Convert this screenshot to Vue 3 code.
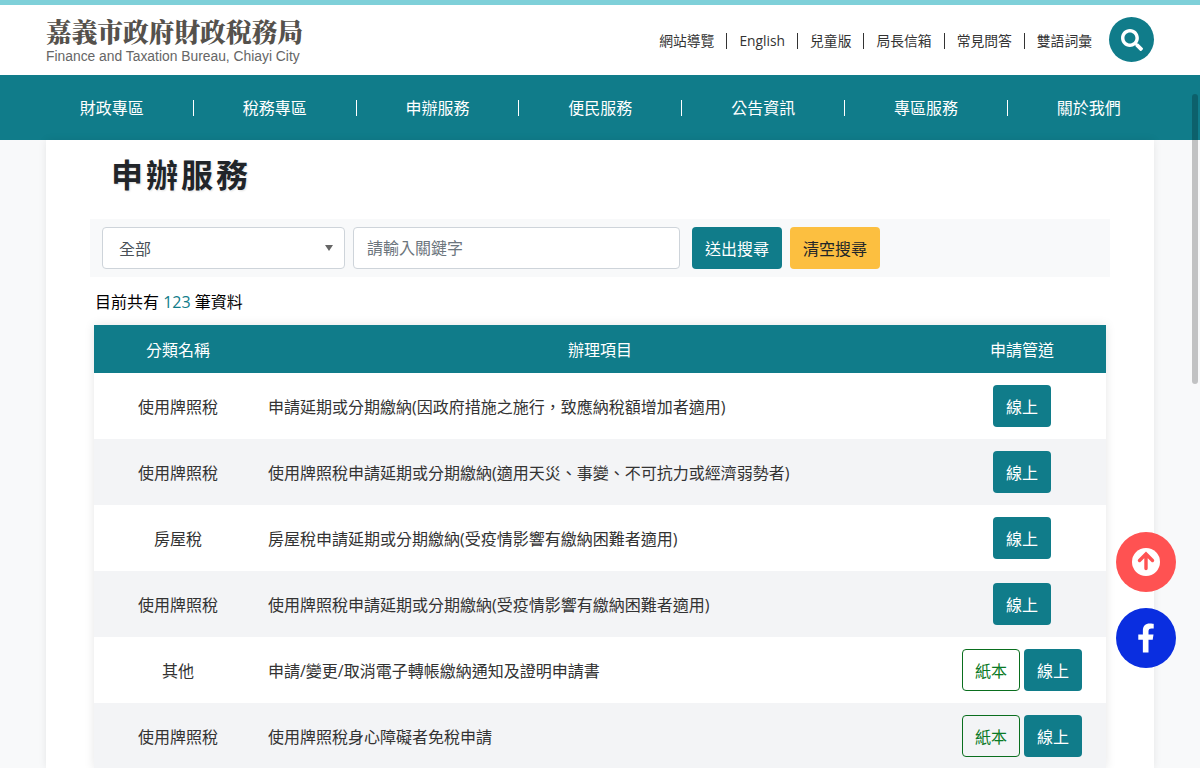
<template>
  <div class="page" lang="zh-Hant">
    <header class="site-header">
      <div class="logo">
        <div class="logo-title">嘉義市政府財政稅務局</div>
        <div class="logo-sub">Finance and Taxation Bureau, Chiayi City</div>
      </div>
      <div class="top-right">
        <ul class="top-links">
          <li v-for="link in topLinks" :key="link">{{ link }}</li>
        </ul>
        <button class="search-circle" type="button" aria-label="搜尋">
          <svg width="22" height="22" viewBox="0 0 512 512">
            <path fill="#fff" d="M505 442.700L405.300 343c-4.500-4.500-10.600-7-17-7H372c27.600-35.300 44-79.700 44-128C416 93.100 322.900 0 208 0S0 93.100 0 208s93.100 208 208 208c48.300 0 92.700-16.400 128-44v16.300c0 6.400 2.500 12.500 7 17l99.700 99.700c9.400 9.400 24.600 9.400 33.900 0l28.300-28.300c9.400-9.400 9.400-24.600.1-34zM208 336c-70.700 0-128-57.200-128-128 0-70.700 57.200-128 128-128 70.700 0 128 57.200 128 128 0 70.700-57.200 128-128 128z" />
          </svg>
        </button>
      </div>
    </header>

    <nav class="main-nav">
      <a v-for="item in navItems" :key="item" class="nav-item">{{ item }}</a>
    </nav>

    <main class="content">
      <h1>申辦服務</h1>

      <form class="search-bar" @submit.prevent>
        <div class="select-box">
          <span>全部</span>
          <i class="caret"></i>
        </div>
        <input class="keyword" type="text" placeholder="請輸入關鍵字" />
        <button class="btn btn-teal wide" type="submit">送出搜尋</button>
        <button class="btn btn-yellow wide" type="button">清空搜尋</button>
      </form>

      <p class="count">目前共有 <span>123</span> 筆資料</p>

      <table class="data-table">
        <thead>
          <tr>
            <th class="col-type">分類名稱</th>
            <th>辦理項目</th>
            <th class="col-channel">申請管道</th>
          </tr>
        </thead>
        <tbody>
          <tr v-for="row in rows" :key="row.title">
            <td class="cell-center">{{ row.type }}</td>
            <td class="cell-title">{{ row.title }}</td>
            <td class="cell-center">
              <div class="channels">
                <a v-if="row.paper" class="btn btn-outline">紙本</a>
                <a class="btn btn-teal">線上</a>
              </div>
            </td>
          </tr>
        </tbody>
      </table>
    </main>

    <div class="float-btns">
      <a class="float-btn to-top">
        <svg width="30" height="30" viewBox="0 0 30 30">
          <circle cx="15" cy="15" r="14" fill="#fff" />
          <path d="M15 21.500V7M8.500 13.500L15 7l6.500 6.500" fill="none" stroke="#ff5252" stroke-width="3.400" stroke-linecap="round" />
        </svg>
      </a>
      <a class="float-btn fb">
        <svg width="18" height="30" viewBox="0 0 320 512">
          <path fill="#fff" d="M279.140 288l14.220-92.660h-88.910v-60.130c0-25.350 12.420-50.060 52.240-50.060h40.420V6.260S260.430 0 225.360 0c-73.220 0-121.080 44.380-121.080 124.720v70.620H22.890V288h81.390v224h100.170V288z" />
        </svg>
      </a>
    </div>

    <div class="scroll-thumb"></div>
  </div>
</template>

<script setup>
const topLinks = ['網站導覽', 'English', '兒童版', '局長信箱', '常見問答', '雙語詞彙'];

const navItems = ['財政專區', '稅務專區', '申辦服務', '便民服務', '公告資訊', '專區服務', '關於我們'];

const rows = [
  { type: '使用牌照稅', title: '申請延期或分期繳納(因政府措施之施行，致應納稅額增加者適用)', paper: false },
  { type: '使用牌照稅', title: '使用牌照稅申請延期或分期繳納(適用天災、事變、不可抗力或經濟弱勢者)', paper: false },
  { type: '房屋稅', title: '房屋稅申請延期或分期繳納(受疫情影響有繳納困難者適用)', paper: false },
  { type: '使用牌照稅', title: '使用牌照稅申請延期或分期繳納(受疫情影響有繳納困難者適用)', paper: false },
  { type: '其他', title: '申請/變更/取消電子轉帳繳納通知及證明申請書', paper: true },
  { type: '使用牌照稅', title: '使用牌照稅身心障礙者免稅申請', paper: true },
];
</script>

<style>
html,
body {
  margin: 0;
  height: 768px;
  overflow: hidden;
  background: #f8f9fa;
}
</style>

<style scoped>
.page {
  position: relative;
  height: 768px;
  overflow: hidden;
  font-family: "Open Sans", "Noto Sans CJK TC", sans-serif;
  font-size: 16px;
  color: #212529;
}

.site-header {
  height: 70px;
  border-top: 5px solid #7fd0d9;
  background: #fff;
  display: flex;
  justify-content: space-between;
  align-items: center;
  padding: 0 46px;
}

.logo {
  margin-top: -2px;
}

.logo-title {
  font-family: "Noto Serif CJK TC", "Noto Sans CJK TC", serif;
  font-size: 25.700px;
  font-weight: 900;
  line-height: 32px;
  color: #55514c;
}

.logo-sub {
  font-family: "Liberation Sans", sans-serif;
  font-size: 13.850px;
  line-height: 16px;
  color: #666;
  margin-top: 1px;
}

.top-right {
  display: flex;
  align-items: center;
}

.top-links {
  display: flex;
  list-style: none;
  margin: 2px 5px 0 0;
  padding: 0;
  font-size: 13.800px;
  color: #333;
}

.top-links li {
  line-height: 16px;
  padding: 0 12px;
  border-left: 1px solid #333;
}

.top-links li:first-child {
  border-left: none;
}

.search-circle {
  width: 45px;
  height: 45px;
  border: none;
  border-radius: 50%;
  background: #107c8a;
  display: flex;
  align-items: center;
  justify-content: center;
  padding: 0;
  margin-top: -1px;
}

.main-nav {
  height: 65px;
  background: #107c8a;
  display: flex;
  align-items: center;
  padding: 0 30.200px 0 30.900px;
}

.nav-item {
  flex: 1;
  text-align: center;
  color: #fff;
  line-height: 16px;
  border-left: 1px solid #fff;
}

.nav-item:first-child {
  border-left: none;
}

.content {
  width: 1108px;
  height: 628px;
  box-sizing: border-box;
  margin: 0 auto;
  padding: 0 44px;
  background: #fff;
  box-shadow: 0 0 8px rgba(0, 0, 0, 0.08);
}

h1 {
  margin: 0;
  padding: 12px 0 0 21px;
  font-size: 32px;
  font-weight: 700;
  line-height: 45px;
  letter-spacing: 3px;
  text-shadow: 1px 1px 2px rgba(0, 0, 0, 0.12);
}

.search-bar {
  margin-top: 22px;
  height: 58px;
  box-sizing: border-box;
  background: #f8f9fa;
  padding: 8px 12px;
  display: flex;
  gap: 8px;
}

.select-box {
  width: 243px;
  height: 42px;
  box-sizing: border-box;
  border: 1px solid #ced4da;
  border-radius: 4px;
  background: #fff;
  padding: 0 15px 0 16px;
  display: flex;
  align-items: center;
  justify-content: space-between;
  color: #495057;
}

.caret {
  width: 0;
  height: 0;
  border-left: 4px solid transparent;
  border-right: 4px solid transparent;
  border-top: 6.500px solid #666;
  margin-right: -4px;
}

.keyword {
  width: 327px;
  height: 42px;
  box-sizing: border-box;
  border: 1px solid #ced4da;
  border-radius: 4px;
  padding: 0 13px;
  font: inherit;
  color: #495057;
}

.keyword::placeholder {
  color: #6c757d;
}

.btn {
  box-sizing: border-box;
  height: 42px;
  width: 58px;
  border: 1px solid transparent;
  border-radius: 4px;
  display: inline-flex;
  align-items: center;
  justify-content: center;
  font: inherit;
  padding: 0;
}

.btn.wide {
  width: 90px;
}

.search-bar .btn-teal {
  margin-left: 4px;
}

.btn-teal {
  background: #107c8a;
  color: #fff;
}

.btn-yellow {
  background: #fcbf40;
  color: #212529;
}

.btn-outline {
  background: transparent;
  border-color: #0a6e1e;
  color: #0a7a26;
}

.count {
  margin: 0;
  padding: 14px 0 0 5px;
  line-height: 22px;
  height: 48px;
  box-sizing: border-box;
  color: #000;
}

.count span {
  color: #107c8a;
}

.data-table {
  width: 1012px;
  margin-left: 4px;
  border-collapse: collapse;
  table-layout: fixed;
  box-shadow: 0 0 10px rgba(0, 0, 0, 0.1);
}

.data-table th {
  height: 48px;
  padding: 0;
  background: #107c8a;
  color: #fff;
  font-weight: 400;
}

.col-type {
  width: 168px;
}

.col-channel {
  width: 168px;
}

.data-table td {
  height: 66px;
  padding: 0;
  color: #333;
}

.data-table tbody tr:nth-child(even) td {
  background: #f3f4f6;
}

.cell-center {
  text-align: center;
}

.cell-title {
  padding-left: 6px !important;
}

.channels {
  display: flex;
  justify-content: center;
  gap: 4px;
}

.float-btns {
  position: absolute;
  left: 1116px;
  top: 532px;
  display: flex;
  flex-direction: column;
  gap: 16px;
}

.float-btn {
  width: 60px;
  height: 60px;
  border-radius: 50%;
  display: flex;
  align-items: center;
  justify-content: center;
}

.to-top {
  background: #ff5252;
}

.fb {
  background: #0a2ee0;
}

.scroll-thumb {
  position: absolute;
  left: 1192px;
  top: 94px;
  width: 6px;
  height: 290px;
  border-radius: 3px;
  background: rgba(0, 0, 0, 0.22);
}
</style>
